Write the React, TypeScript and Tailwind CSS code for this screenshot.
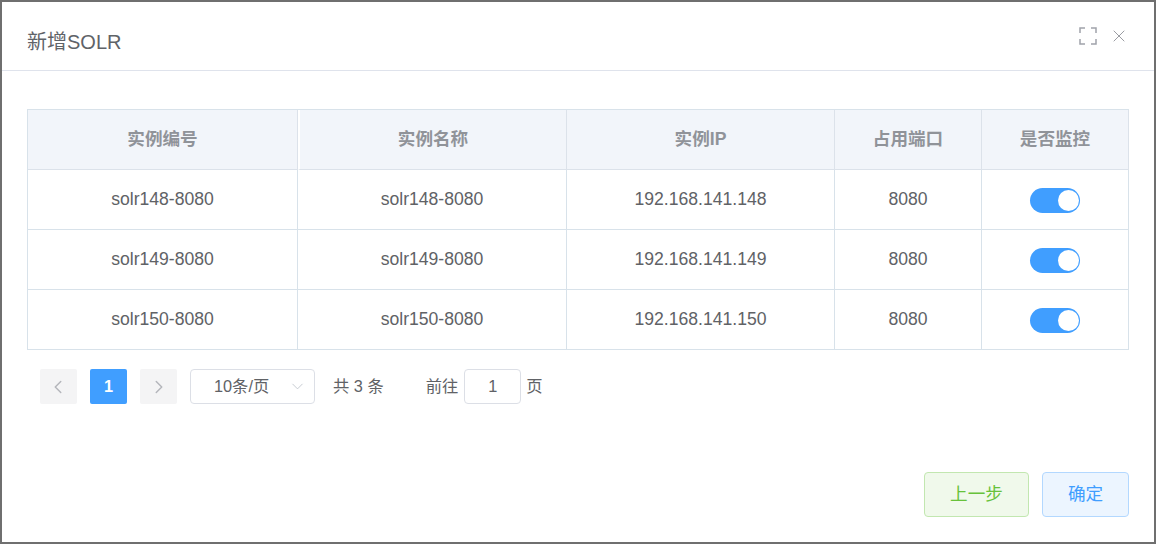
import { ChevronDown, ChevronLeft, ChevronRight, X } from "lucide-react";

const rows = [
  { id: "solr148-8080", ip: "192.168.141.148", port: "8080" },
  { id: "solr149-8080", ip: "192.168.141.149", port: "8080" },
  { id: "solr150-8080", ip: "192.168.141.150", port: "8080" },
];

const headers = ["实例编号", "实例名称", "实例IP", "占用端口", "是否监控"];

const gridCols = "grid grid-cols-[270px_269px_268px_147px_147px]";

function Cell({ children }: { children: React.ReactNode }) {
  return (
    <div className="flex h-[60px] items-center justify-center border-r border-b border-[#d8e2ea]">
      {children}
    </div>
  );
}

function HeadCell({ children, index }: { children: React.ReactNode; index: number }) {
  return (
    <div
      className={`flex h-[60px] items-center justify-center border-b border-r border-[#dce2ea] bg-[#f2f5fa] font-bold text-[#909399] ${
        index === 1 ? "border-l-2 border-l-white" : ""
      }`}
    >
      {children}
    </div>
  );
}

function Toggle() {
  return (
    <div className="mt-[2px] flex h-[25px] w-[50px] items-center justify-end rounded-full bg-[#409eff] pr-[1px]">
      <div className="h-[21px] w-[21px] rounded-full bg-white" />
    </div>
  );
}

export default function App() {
  return (
    <div className="flex h-[544px] w-[1156px] flex-col border-2 border-[#6f6f6f] bg-white font-['Liberation_Sans','Noto_Sans_CJK_SC',sans-serif] text-[#606266]">
      <div className="flex h-[69px] items-center justify-between border-b border-[#dfe3ec] pl-[25px] pr-[25px]">
        <span className="mt-[12px] text-[20px] text-[#5f6368]">新增SOLR</span>
        <div className="flex items-center gap-[12px] text-[#909399]">
          <svg width="18" height="18" viewBox="0 0 18 18" fill="none" stroke="#a0a3aa" strokeWidth="1.5">
            <path d="M1 6V1h5M12 1h5v5M17 12v5h-5M6 17H1v-5" />
          </svg>
          <X size={20} strokeWidth={1.1} />
        </div>
      </div>

      <div className="flex-1 px-[25px] pt-[38px]">
        <div className="w-[1102px] border-t border-l border-[#d8e2ea] text-[17.6px]">
          <div className={gridCols}>
            {headers.map((h, i) => (
              <HeadCell key={h} index={i}>
                {h}
              </HeadCell>
            ))}
          </div>
          {rows.map((r) => (
            <div key={r.id} className={gridCols}>
              <Cell>{r.id}</Cell>
              <Cell>{r.id}</Cell>
              <Cell>{r.ip}</Cell>
              <Cell>{r.port}</Cell>
              <Cell>
                <Toggle />
              </Cell>
            </div>
          ))}
        </div>

        <div className="mt-[19px] flex h-[35px] items-center pl-[13px] text-[16.3px]">
          <div className="flex h-[35px] w-[37px] items-center justify-center rounded-[2px] bg-[#f4f4f5] text-[#b4b6bb]">
            <ChevronLeft size={22} strokeWidth={1.6} className="-ml-[2px]" />
          </div>
          <div className="ml-[13px] flex h-[35px] w-[37px] items-center justify-center rounded-[2px] bg-[#409eff] font-bold text-white">
            1
          </div>
          <div className="ml-[13px] flex h-[35px] w-[37px] items-center justify-center rounded-[2px] bg-[#f4f4f5] text-[#b4b6bb]">
            <ChevronRight size={22} strokeWidth={1.6} />
          </div>
          <div className="ml-[13px] flex h-[35px] w-[125px] items-center justify-between rounded-[4px] border border-[#dcdfe6] pl-[23px] pr-[7px]">
            <span>10条/页</span>
            <ChevronDown size={19} strokeWidth={1.1} className="text-[#c0c4cc]" />
          </div>
          <span className="ml-[18px]">共 3 条</span>
          <span className="ml-[42px]">前往</span>
          <div className="ml-[6px] flex h-[35px] w-[57px] items-center justify-center rounded-[4px] border border-[#dcdfe6]">
            1
          </div>
          <span className="ml-[5px]">页</span>
        </div>
      </div>

      <div className="flex justify-end gap-[13px] pb-[25px] pr-[25px] text-[17.6px]">
        <div className="flex h-[45px] w-[105px] items-center justify-center rounded-[4px] border border-[#c2e7b0] bg-[#f0f9eb] text-[#67c23a]">
          上一步
        </div>
        <div className="flex h-[45px] w-[87px] items-center justify-center rounded-[4px] border border-[#b3d8ff] bg-[#ecf5ff] text-[#409eff]">
          确定
        </div>
      </div>
    </div>
  );
}
